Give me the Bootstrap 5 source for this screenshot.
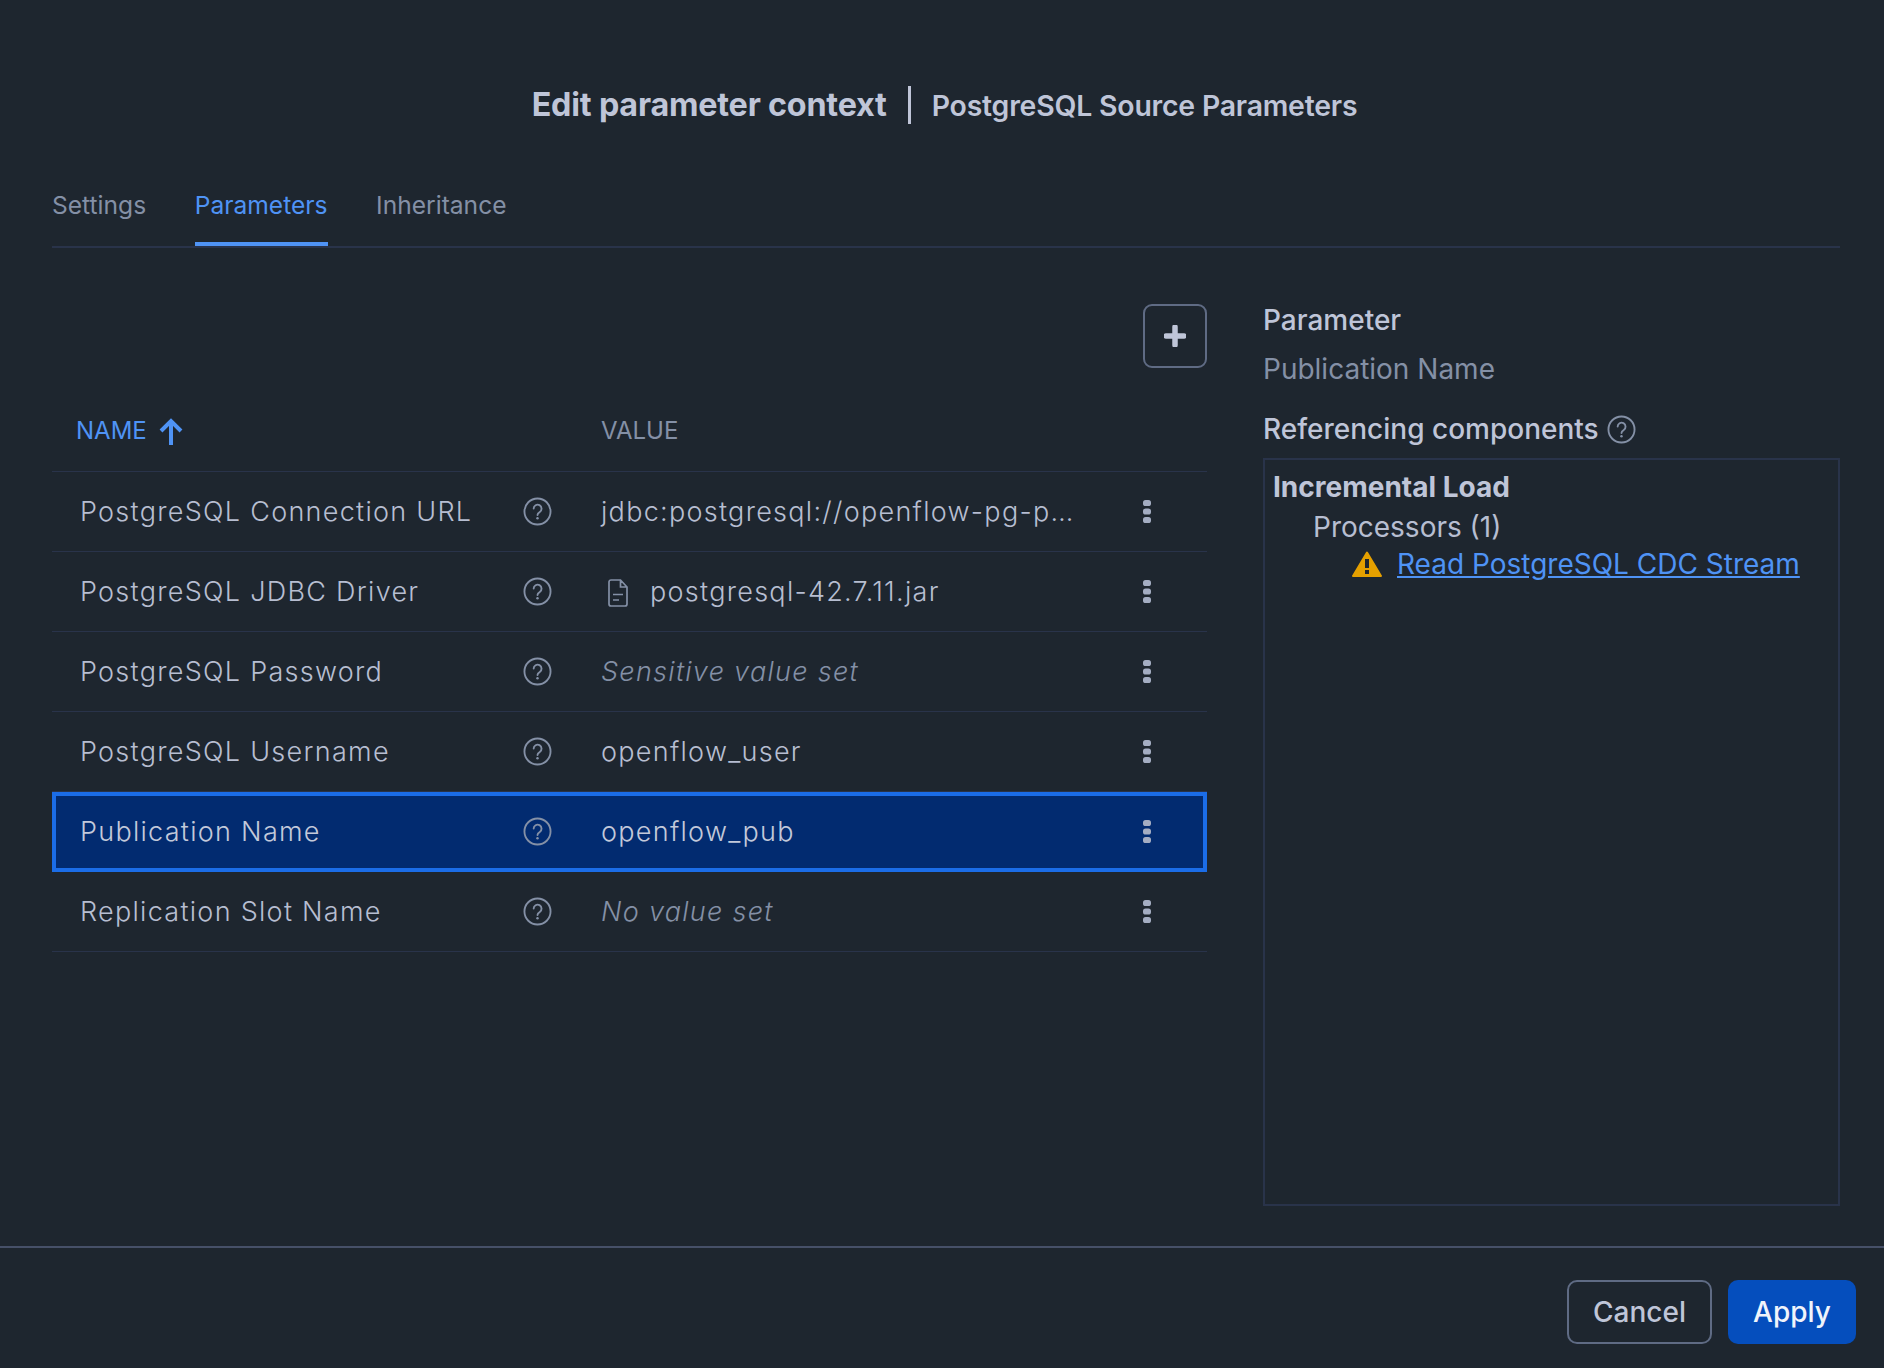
<!DOCTYPE html>
<html lang="en"><head><meta charset="utf-8"><title>Edit parameter context</title>
<link href="https://cdn.jsdelivr.net/npm/bootstrap@5.3.0/dist/css/bootstrap.min.css" rel="stylesheet">
<style>
html,body{height:100%}
body{background:#1e262f;font-family:Inter,"Liberation Sans",sans-serif;color:#bdc4d6;overflow:hidden}
.dlg{height:1368px}
.dlg-head{height:188px;padding-top:81px;padding-left:5px}
.ttl{font-size:32.3px;line-height:46px;font-weight:650;margin:0;padding-bottom:1px;color:#bfc5d8;letter-spacing:-.2px}
.ttl-sep{width:3px;height:38px;background:#bfc5d8;margin:0 21px 0 21px}
.ttl-sub{font-size:28.4px;line-height:46px;font-weight:600;color:#bfc5d8;letter-spacing:-.2px;padding-top:2px}
.tabbar{margin:0 44px 0 52px;border-bottom:2px solid #29334a;gap:48.5px;height:60px}
.tabbar .nav-link{padding:0;font-size:24.6px;line-height:34px;color:#8490a6;border:0;height:58px;background:none}
.tabbar .nav-link.active{color:#4f93f5;border-bottom:4px solid #4f93f5}
.mainrow{padding:56px 44px 0 52px;gap:56px;flex:1 1 auto;min-height:0}
.leftcol{width:1155px;flex:none}
.addbtn{width:64px;height:64px;border:2px solid #5f6b84;border-radius:9px;color:#bfc5d8;background:none;padding:0}
.ptable{table-layout:fixed;width:1155px;margin:27px 0 0;border-collapse:separate;border-spacing:0;--bs-table-bg:transparent;--bs-table-color:#b7bed1;--bs-border-color:#29334a}
.ptable>*>*>*{border-bottom:2px solid #29334a;vertical-align:middle;height:80px;font-size:27px;font-weight:300;letter-spacing:1.28px;white-space:nowrap}
.ptable tbody td{padding:0}
.ptable tbody td.tx{padding-top:2px}
.ptable thead th{height:77px;font-size:24px;letter-spacing:0;font-weight:400;color:#8490a6;padding:0 0 5px}
.ptable thead th.sorted{color:#4f93f5;padding-left:24px}
.ptable tbody td.nm{padding-left:28px}
.ptable .it{color:#8490a6;font-style:italic}
.ptable tr.sel td{background:#022b70;color:#c3c9da}
.ptable tr.sel{outline:4px solid #1b6de8;outline-offset:-4px}
.ic-help{color:#8490a6;display:block}
.kebab{margin-left:56px;display:block}
.filei{margin:0 22px 0 7px;color:#8490a6}
.sidecol{flex:1 1 auto;min-width:0}
.sh{font-size:28px;line-height:36px;font-weight:500;color:#bfc5d8}
.sv{font-size:28px;line-height:36px;color:#8490a6}
.sh-a{margin-top:-2px}.sv-a{margin-top:13px}.sh-b{margin-top:24px;margin-bottom:11px}
.refbox{border:2px solid #29334a;height:748px;padding:9px 8px;font-size:28px}
.refhead{font-weight:650;color:#bfc5d8;line-height:36px}
.refproc{padding-left:40px;color:#b7bed1;line-height:38px;margin-top:3px}
.refitem{padding-left:79px;line-height:36px}
.refitem a{color:#4f93f5;margin-left:15px}
.dlg-foot{border-top:2px solid #465068;height:122px;padding:32px 28px 0 0;gap:16px;justify-content:flex-end;flex:none}
.fbtn{height:64px;font-size:28px;font-weight:500;border-radius:10px;padding:0;line-height:1}
.fbtn-c{width:145px;border:2px solid #5f6b84;color:#bfc5d8;background:none}
.fbtn-a{width:128px;border:0;background:#054ebd;color:#f0f4fb}
</style></head><body>
<div class="dlg d-flex flex-column">
 <div class="dlg-head d-flex justify-content-center align-items-start">
  <div class="d-flex align-items-center"><h1 class="ttl">Edit parameter context</h1><span class="ttl-sep"></span><span class="ttl-sub">PostgreSQL Source Parameters</span></div>
 </div>
 <ul class="nav tabbar">
  <li class="nav-item"><a class="nav-link" href="#">Settings</a></li>
  <li class="nav-item"><a class="nav-link active" href="#">Parameters</a></li>
  <li class="nav-item"><a class="nav-link" href="#">Inheritance</a></li>
 </ul>
 <div class="d-flex mainrow">
  <div class="leftcol">
   <div class="d-flex justify-content-end"><button class="btn addbtn d-flex align-items-center justify-content-center" aria-label="Add"><svg width="22" height="22" viewBox="0 0 22 22"><path d="M11 2v18M2 11h18" stroke="currentColor" stroke-width="5.500" stroke-linecap="round"/></svg></button></div>
   <table class="table ptable">
    <colgroup><col style="width:471px"><col style="width:78px"><col><col style="width:120px"></colgroup>
    <thead><tr><th colspan="2" class="sorted">NAME <svg class="ms-1" width="26" height="28" viewBox="0 0 26 28"><path d="M13 27V3.500M3 13L13 3l10 10" fill="none" stroke="currentColor" stroke-width="4"/></svg></th><th>VALUE</th><th></th></tr></thead>
    <tbody id="rows">
    <tr><td class="nm tx">PostgreSQL Connection URL</td><td><svg class="ic-help" width="29" height="29" viewBox="0 0 28 28"><circle cx="14" cy="14" r="12.6" fill="none" stroke="currentColor" stroke-width="1.8"/><path d="M10.3 11.2a3.8 3.8 0 1 1 5.9 3.2c-1.4.9-2.2 1.5-2.2 3" fill="none" stroke="currentColor" stroke-width="1.8" stroke-linecap="round"/><circle cx="14" cy="20.6" r="1.2" fill="currentColor"/></svg></td><td class="tx">jdbc:postgresql://openflow-pg-p…</td><td><svg class="kebab" width="8" height="23" viewBox="0 0 8 23"><rect width="8" height="6" rx="2.600" fill="#a4adc2"/><rect y="8.500" width="8" height="6" rx="2.600" fill="#a4adc2"/><rect y="17" width="8" height="6" rx="2.600" fill="#a4adc2"/></svg></td></tr>
    <tr><td class="nm tx">PostgreSQL JDBC Driver</td><td><svg class="ic-help" width="29" height="29" viewBox="0 0 28 28"><circle cx="14" cy="14" r="12.6" fill="none" stroke="currentColor" stroke-width="1.8"/><path d="M10.3 11.2a3.8 3.8 0 1 1 5.9 3.2c-1.4.9-2.2 1.5-2.2 3" fill="none" stroke="currentColor" stroke-width="1.8" stroke-linecap="round"/><circle cx="14" cy="20.6" r="1.2" fill="currentColor"/></svg></td><td class="tx"><div class="d-flex align-items-center"><svg class="filei" width="20" height="28" viewBox="0 0 20 28"><path d="M2.500 1h10l6.500 7v17a2 2 0 0 1-2 2h-14a2 2 0 0 1-2-2V3a2 2 0 0 1 2-2zM12.500 1v7h6.500M5 15.500h10M5 21h6" fill="none" stroke="currentColor" stroke-width="1.700"/></svg>postgresql-42.7.11.jar</div></td><td><svg class="kebab" width="8" height="23" viewBox="0 0 8 23"><rect width="8" height="6" rx="2.600" fill="#a4adc2"/><rect y="8.500" width="8" height="6" rx="2.600" fill="#a4adc2"/><rect y="17" width="8" height="6" rx="2.600" fill="#a4adc2"/></svg></td></tr>
    <tr><td class="nm tx">PostgreSQL Password</td><td><svg class="ic-help" width="29" height="29" viewBox="0 0 28 28"><circle cx="14" cy="14" r="12.6" fill="none" stroke="currentColor" stroke-width="1.8"/><path d="M10.3 11.2a3.8 3.8 0 1 1 5.9 3.2c-1.4.9-2.2 1.5-2.2 3" fill="none" stroke="currentColor" stroke-width="1.8" stroke-linecap="round"/><circle cx="14" cy="20.6" r="1.2" fill="currentColor"/></svg></td><td class="tx it">Sensitive value set</td><td><svg class="kebab" width="8" height="23" viewBox="0 0 8 23"><rect width="8" height="6" rx="2.600" fill="#a4adc2"/><rect y="8.500" width="8" height="6" rx="2.600" fill="#a4adc2"/><rect y="17" width="8" height="6" rx="2.600" fill="#a4adc2"/></svg></td></tr>
    <tr><td class="nm tx">PostgreSQL Username</td><td><svg class="ic-help" width="29" height="29" viewBox="0 0 28 28"><circle cx="14" cy="14" r="12.6" fill="none" stroke="currentColor" stroke-width="1.8"/><path d="M10.3 11.2a3.8 3.8 0 1 1 5.9 3.2c-1.4.9-2.2 1.5-2.2 3" fill="none" stroke="currentColor" stroke-width="1.8" stroke-linecap="round"/><circle cx="14" cy="20.6" r="1.2" fill="currentColor"/></svg></td><td class="tx">openflow_user</td><td><svg class="kebab" width="8" height="23" viewBox="0 0 8 23"><rect width="8" height="6" rx="2.600" fill="#a4adc2"/><rect y="8.500" width="8" height="6" rx="2.600" fill="#a4adc2"/><rect y="17" width="8" height="6" rx="2.600" fill="#a4adc2"/></svg></td></tr>
    <tr class="sel"><td class="nm tx">Publication Name</td><td><svg class="ic-help" width="29" height="29" viewBox="0 0 28 28"><circle cx="14" cy="14" r="12.6" fill="none" stroke="currentColor" stroke-width="1.8"/><path d="M10.3 11.2a3.8 3.8 0 1 1 5.9 3.2c-1.4.9-2.2 1.5-2.2 3" fill="none" stroke="currentColor" stroke-width="1.8" stroke-linecap="round"/><circle cx="14" cy="20.6" r="1.2" fill="currentColor"/></svg></td><td class="tx">openflow_pub</td><td><svg class="kebab" width="8" height="23" viewBox="0 0 8 23"><rect width="8" height="6" rx="2.600" fill="#a4adc2"/><rect y="8.500" width="8" height="6" rx="2.600" fill="#a4adc2"/><rect y="17" width="8" height="6" rx="2.600" fill="#a4adc2"/></svg></td></tr>
    <tr><td class="nm tx">Replication Slot Name</td><td><svg class="ic-help" width="29" height="29" viewBox="0 0 28 28"><circle cx="14" cy="14" r="12.6" fill="none" stroke="currentColor" stroke-width="1.8"/><path d="M10.3 11.2a3.8 3.8 0 1 1 5.9 3.2c-1.4.9-2.2 1.5-2.2 3" fill="none" stroke="currentColor" stroke-width="1.8" stroke-linecap="round"/><circle cx="14" cy="20.6" r="1.2" fill="currentColor"/></svg></td><td class="tx it">No value set</td><td><svg class="kebab" width="8" height="23" viewBox="0 0 8 23"><rect width="8" height="6" rx="2.600" fill="#a4adc2"/><rect y="8.500" width="8" height="6" rx="2.600" fill="#a4adc2"/><rect y="17" width="8" height="6" rx="2.600" fill="#a4adc2"/></svg></td></tr>
    </tbody>
   </table>
  </div>
  <div class="sidecol">
   <div class="sh sh-a">Parameter</div>
   <div class="sv sv-a">Publication Name</div>
   <div class="d-flex align-items-center gap-2 sh sh-b">Referencing components <svg class="ic-help" width="29" height="29" viewBox="0 0 28 28"><circle cx="14" cy="14" r="12.6" fill="none" stroke="currentColor" stroke-width="1.8"/><path d="M10.3 11.2a3.8 3.8 0 1 1 5.9 3.2c-1.4.9-2.2 1.5-2.2 3" fill="none" stroke="currentColor" stroke-width="1.8" stroke-linecap="round"/><circle cx="14" cy="20.6" r="1.2" fill="currentColor"/></svg></div>
   <div class="refbox">
    <div class="refhead">Incremental Load</div>
    <div class="refproc">Processors (1)</div>
    <div class="refitem d-flex align-items-center"><svg width="30" height="26" viewBox="0 0 30 26"><path d="M15 1.500 29 25H1z" fill="#e5a000" stroke="#e5a000" stroke-width="2" stroke-linejoin="round"/><rect x="13" y="8" width="4" height="9" fill="#1e262f"/><rect x="13" y="19" width="4" height="4" fill="#1e262f"/></svg><a href="#">Read PostgreSQL CDC Stream</a></div>
   </div>
  </div>
 </div>
 <div class="d-flex dlg-foot">
  <button class="btn fbtn fbtn-c">Cancel</button>
  <button class="btn fbtn fbtn-a">Apply</button>
 </div>
</div>
<script src="https://cdn.jsdelivr.net/npm/bootstrap@5.3.0/dist/js/bootstrap.bundle.min.js"></script>
</body></html>
